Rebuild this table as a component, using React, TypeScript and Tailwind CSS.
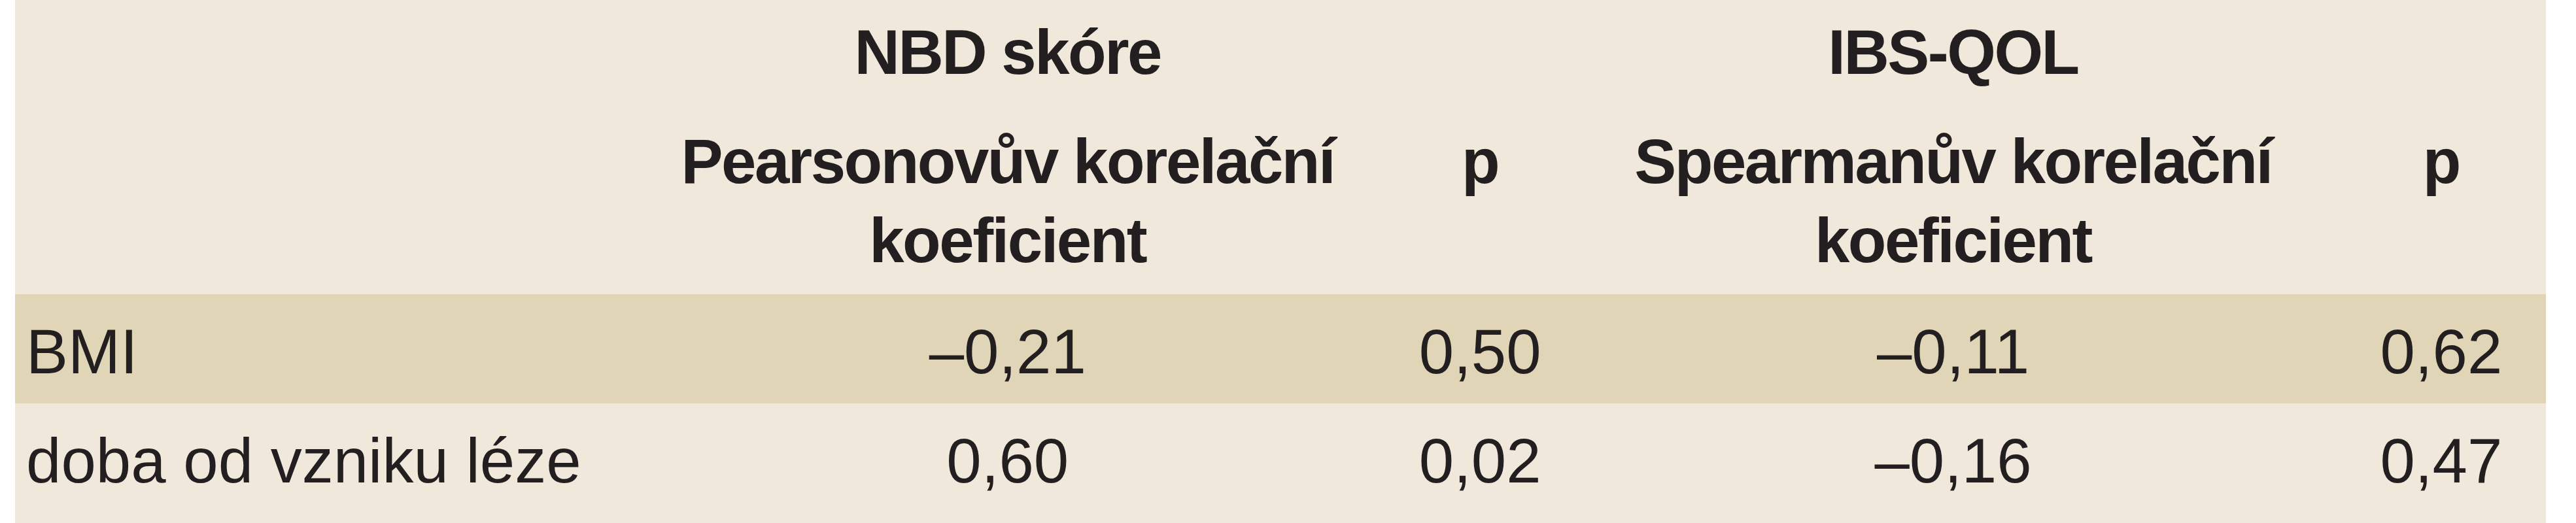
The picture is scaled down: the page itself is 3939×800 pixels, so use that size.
const rows = [
  { label: 'BMI', nbd: '–0,21', nbdP: '0,50', ibs: '–0,11', ibsP: '0,62', shaded: true },
  { label: 'doba od vzniku léze', nbd: '0,60', nbdP: '0,02', ibs: '–0,16', ibsP: '0,47', shaded: false },
];

export default function App() {
  return (
    <div className="w-[3939px] h-[800px] bg-white pl-[23px] pr-[46px]">
      <div
        className="h-full bg-[#f0e8da] text-[#231f20] text-[96px] leading-[121px]"
        style={{ fontFamily: '"Liberation Sans", Arial, sans-serif' }}
      >
        <table className="w-full table-fixed border-collapse">
          <colgroup>
            <col className="w-[932px]" />
            <col className="w-[1170px]" />
            <col className="w-[274px]" />
            <col className="w-[1172px]" />
            <col className="w-[320px]" />
          </colgroup>
          <thead className="font-bold tracking-[-2.5px]">
            <tr>
              <th className="pt-[19px] pb-[23px]" />
              <th className="pt-[19px] pb-[23px] text-center font-bold">NBD skóre</th>
              <th className="pt-[19px] pb-[23px]" />
              <th className="pt-[19px] pb-[23px] text-center font-bold">IBS-QOL</th>
              <th className="pt-[19px] pb-[23px]" />
            </tr>
            <tr>
              <th className="pt-[23px] pb-[22px]" />
              <th className="pt-[23px] pb-[22px] text-center align-top font-bold">
                Pearsonovův korelační
                <br />
                koeficient
              </th>
              <th className="pt-[23px] pb-[22px] text-center align-top font-bold">p</th>
              <th className="pt-[23px] pb-[22px] text-center align-top font-bold">
                Spearmanův korelační
                <br />
                koeficient
              </th>
              <th className="pt-[23px] pb-[22px] text-center align-top font-bold">p</th>
            </tr>
          </thead>
          <tbody>
            {rows.map((r) => (
              <tr key={r.label} className={r.shaded ? 'bg-[#e0d5b6]' : ''}>
                <td className="pt-[27px] pb-[19px] pl-[17px] text-left whitespace-nowrap">{r.label}</td>
                <td className="pt-[27px] pb-[19px] text-center">{r.nbd}</td>
                <td className="pt-[27px] pb-[19px] text-center">{r.nbdP}</td>
                <td className="pt-[27px] pb-[19px] text-center">{r.ibs}</td>
                <td className="pt-[27px] pb-[19px] text-center">{r.ibsP}</td>
              </tr>
            ))}
          </tbody>
        </table>
      </div>
    </div>
  );
}
